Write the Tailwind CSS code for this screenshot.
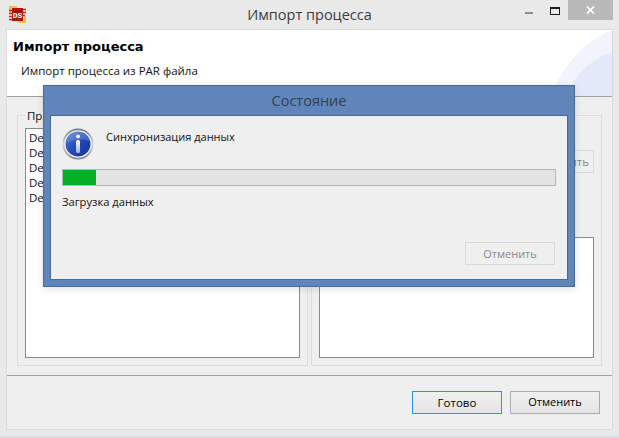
<!DOCTYPE html>
<html lang="ru">
<head>
    <meta charset="UTF-8">
    <title>Импорт процесса</title>
    <script src="https://cdn.jsdelivr.net/npm/@tailwindcss/browser@4"></script>
</head>
<body class="bg-[#e9e9e9] overflow-hidden">
    <div class="relative w-[619px] h-[438px] border-b-2 border-[#d9dfe6] font-['Open_Sans',sans-serif] text-[11.5px] text-[#111]">
        <!-- title bar -->
        <div class="relative h-[29px] flex items-center justify-center">
            <svg class="absolute left-[9px] top-[6px]" width="17" height="17" viewBox="0 0 17 17">
                <path d="M1 7V1h7M16 10v6H9" fill="none" stroke="#f5bd3f" stroke-width="2"/>
                <rect x="3" y="2" width="11" height="13" fill="#b8150f"/>
                <path d="M0 4.500h3M0 7.500h3M0 10.500h3M0 13.500h3M14 3.500h3M14 6.500h3M14 9.500h2" stroke="#c8231b" stroke-width="1.500"/>
                <rect x="4" y="4" width="9" height="9" fill="#a3110c"/>
                <text x="8.500" y="11.500" text-anchor="middle" font-size="8" font-weight="700" font-family="Liberation Mono, monospace" fill="#fff">DS</text>
            </svg>
            <span class="text-[14.5px] leading-none text-[#3c3c3c] relative top-[1px]">Импорт процесса</span>
            <div class="absolute right-[6px] top-0 flex items-start">
                <div class="w-[26px] h-[20px] flex justify-center"><div class="w-[8px] h-[2px] mt-[12px] bg-[#8c8c8c]"></div></div>
                <div class="w-[26px] h-[20px] flex justify-center"><div class="w-[8px] h-[5px] mt-[7px] border border-t-[2px] border-[#1c1c1c] box-content"></div></div>
                <div class="w-[45px] h-[20px] bg-[#b9b9b9] flex items-center justify-center">
                    <svg width="9" height="8" viewBox="0 0 9 8"><path d="M1 0.500 8 7.500M8 0.500 1 7.500" stroke="#fff" stroke-width="1.700"/></svg>
                </div>
            </div>
        </div>

        <!-- wizard panel -->
        <div class="ml-[6px] w-[607px] h-[401px] border border-[#dadada] bg-[#efefef] flex flex-col">
            <div class="relative h-[67px] bg-white border-b border-[#a0a0a0] overflow-hidden pl-[6px] pt-[7px] shrink-0">
                <svg class="absolute right-0 top-0" width="62" height="66" viewBox="0 0 62 66">
                    <path d="M0 66C14 34 34 12 62 0V66Z" fill="#f1f4fc"/>
                    <path d="M16 66C26 44 42 28 62 22V66Z" fill="#e3e9f8"/>
                </svg>
                <h1 class="relative font-['DejaVu_Sans'] font-bold text-[13px] leading-[20px] text-black">Импорт процесса</h1>
                <p class="relative mt-[5px] ml-[8px] leading-[18px]">Импорт процесса из PAR файла</p>
            </div>

            <div class="flex gap-[3px] pl-[10px] pt-[18px] h-[279px] border-b border-[#a0a0a0] shrink-0">
                <div class="relative w-[291px] h-[251px] border border-[#dcdcdc] px-[7px] pt-[12px]">
                    <span class="absolute left-[7px] top-[-7px] bg-[#efefef] px-[2px] leading-[14px]">Процессы</span>
                    <div class="h-[230px] w-[275px] bg-white border border-[#8a8a94] px-[3px] pt-[1px] leading-[15px]">
                        <div>Demo1</div>
                        <div>Demo2</div>
                        <div>Demo3</div>
                        <div>Demo4</div>
                        <div>Demo5</div>
                    </div>
                </div>
                <div class="relative w-[291px] h-[251px] border border-[#dcdcdc] px-[7px] flex flex-col">
                    <div class="self-end mt-[34px] w-[60px] h-[23px] border border-[#d9d9d9] text-right pr-[4px] leading-[21px] text-[#8a8a8a]">Удалить</div>
                    <div class="mt-[64px] h-[121px] w-[275px] bg-white border border-[#8a8a94]"></div>
                </div>
            </div>

            <div class="flex justify-end gap-[8px] pt-[15px] pr-[12px]">
                <button class="w-[90px] h-[23px] border border-[#2b90ff] bg-gradient-to-b from-[#f0f0f0] to-[#e4e4e4] text-black">Готово</button>
                <button class="w-[90px] h-[23px] border border-[#ababab] bg-gradient-to-b from-[#f0f0f0] to-[#e4e4e4] text-[11px] text-black">Отменить</button>
            </div>
        </div>

        <!-- modal dialog -->
        <div class="absolute left-[43px] top-[85px] w-[532px] h-[202px] bg-[#5f85ba] border border-[#4a6894] shadow-[0_2px_8px_rgba(0,0,0,0.12)] flex flex-col">
            <div class="h-[29px] shrink-0 flex items-center justify-center text-[14.5px] text-[#34404f]">Состояние</div>
            <div class="ml-[6px] w-[518px] h-[165px] bg-[#efefef] border border-[#4a6894] px-[11px] flex flex-col">
                <div class="flex h-[53px] pt-[12px] shrink-0">
                    <svg width="32" height="32" viewBox="0 0 32 32" class="shrink-0">
                        <defs>
                            <linearGradient id="ring" x1="0" y1="0" x2="0" y2="1"><stop offset="0" stop-color="#70747c"/><stop offset="0.5" stop-color="#d8d8dc"/><stop offset="1" stop-color="#80848e"/></linearGradient>
                            <linearGradient id="ball" x1="0" y1="0" x2="1" y2="1"><stop offset="0" stop-color="#4f7bd8"/><stop offset="0.55" stop-color="#2148b2"/><stop offset="1" stop-color="#15339a"/></linearGradient>
                            <linearGradient id="stem" x1="0" y1="0" x2="0" y2="1"><stop offset="0" stop-color="#ffffff"/><stop offset="1" stop-color="#9fb0d8"/></linearGradient>
                        </defs>
                        <circle cx="16" cy="16" r="15.500" fill="url(#ring)"/>
                        <circle cx="16" cy="16" r="13.700" fill="#f4f5f8"/>
                        <circle cx="16" cy="16" r="12.500" fill="url(#ball)"/>
                        <path d="M4 15C6 7 12 3.500 16 3.500S26 7 28 13C22 10 12 11 4 15Z" fill="#fff" opacity=".18"/>
                        <circle cx="16" cy="8.500" r="2" fill="#eef1f8"/>
                        <rect x="14" y="12" width="4" height="13" rx="1.500" fill="url(#stem)"/>
                    </svg>
                    <span class="ml-[12px] text-[11px] leading-[18px] text-[#111]">Синхронизация данных</span>
                </div>
                <div class="w-[494px] h-[17px] shrink-0 bg-[#e3e3e3] border border-[#b5b5b5]">
                    <div class="h-full bg-[#06b025]" style="width: 33px"></div>
                </div>
                <p class="mt-[7px] text-[11.2px] leading-[18px]">Загрузка данных</p>
                <div class="mt-auto mb-[14px] self-end mr-[1px] w-[90px] h-[23px] border border-[#d9d9d9] text-center text-[11px] leading-[21px] text-[#8a8a8a]">Отменить</div>
            </div>
        </div>
    </div>
</body>
</html>
